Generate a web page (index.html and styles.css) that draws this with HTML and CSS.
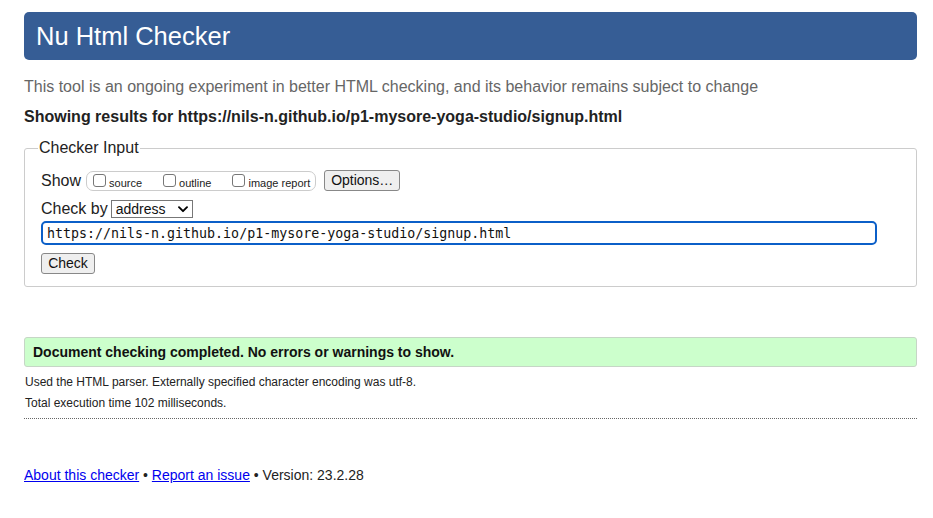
FILE: index.html
```html
<!DOCTYPE html>
<html lang="en">
<head>
<meta charset="utf-8">
<title>Nu Html Checker</title>
<link rel="stylesheet" href="styles.css">
</head>
<body>
<header class="banner"><h1 class="title">Nu Html Checker</h1></header>
<p class="subtitle">This tool is an ongoing experiment in better HTML checking, and its behavior remains subject to change</p>
<p class="showing">Showing results for https://nils-n.github.io/p1-mysore-yoga-studio/signup.html</p>
<form class="form">
  <fieldset class="fieldset">
    <legend class="legend">Checker Input</legend>
    <div class="row">
      <span class="label">Show</span>
      <span class="showgroup">
        <label class="opt"><input type="checkbox" class="cb"><span class="opttext">source</span></label>
        <label class="opt"><input type="checkbox" class="cb"><span class="opttext">outline</span></label>
        <label class="opt"><input type="checkbox" class="cb"><span class="opttext">image report</span></label>
      </span>
      <button type="button" class="btn options">Options…</button>
    </div>
    <div class="row row2">
      <span class="label">Check by</span>
      <span class="selectwrap">
        <select class="select"><option>address</option></select>
        <svg class="chev" width="10" height="7" viewBox="0 0 10 7" aria-hidden="true"><path d="M1 1.2 L5 5.2 L9 1.2" fill="none" stroke="#000" stroke-width="1.9" stroke-linecap="round" stroke-linejoin="round"/></svg>
      </span>
    </div>
    <div class="row row3">
      <input type="text" class="url" value="https://nils-n.github.io/p1-mysore-yoga-studio/signup.html">
    </div>
    <div class="row row4">
      <button type="button" class="btn check">Check</button>
    </div>
  </fieldset>
</form>
<div class="success">Document checking completed. No errors or warnings to show.</div>
<p class="info">Used the HTML parser. Externally specified character encoding was utf-8.</p>
<p class="info info2">Total execution time 102 milliseconds.</p>
<hr class="rule">
<footer class="footer"><a href="#" class="link">About this checker</a> • <a href="#" class="link">Report an issue</a> • Version: 23.2.28</footer>
</body>
</html>
```
FILE: styles.css
```css
html, body { background: #fff; }
body {
  margin: 12px 16px 0 24px;
  font-family: "Liberation Sans", Arial, Helvetica, sans-serif;
  color: #222;
}
.banner {
  background: #365d95;
  border-radius: 5px;
  height: 48px;
  display: flex;
  align-items: center;
  padding-left: 12px;
}
.title {
  margin: 0;
  font-size: 25.5px;
  font-weight: normal;
  color: #fff;
}
.subtitle {
  margin: 18px 0 0;
  font-size: 16px;
  line-height: 18px;
  color: #666;
}
.showing {
  margin: 12px 0 0;
  font-size: 16px;
  line-height: 18px;
  font-weight: bold;
  color: #222;
}
.form { margin: 13px 0 0; }
.fieldset {
  margin: 0;
  border: 1px solid #ccc;
  border-radius: 3px;
  padding: 13px 16px 12px 16px;
}
.legend {
  padding: 0 1px;
  margin-left: -3px;
  font-size: 16px;
  color: #222;
}
.row { display: flex; align-items: center; }
.label { font-size: 16px; color: #222; }
.showgroup {
  display: inline-flex;
  align-items: center;
  margin-left: 5px;
  height: 18px;
  border: 1px solid #ccc;
  border-radius: 7px;
  padding: 0 5px 0 6px;
}
.opt {
  display: inline-flex;
  align-items: center;
  margin-right: 21px;
}
.opt:last-child { margin-right: 0; }
.opttext {
  font-size: 11px;
  color: #222;
  margin-top: 4px;
}
.cb {
  appearance: none;
  -webkit-appearance: none;
  width: 13px;
  height: 13px;
  margin: 0 3px 0 0;
  border: 1px solid #777;
  border-radius: 3px;
  background: #fff;
  box-sizing: border-box;
}
.btn {
  font-family: "Liberation Sans", Arial, sans-serif;
  font-size: 14px;
  color: #111;
  background: #efefef;
  border: 1px solid #888;
  border-radius: 3px;
  height: 21px;
  padding: 0 6px;
  line-height: 19px;
}
.options { margin-left: 8px; width: 76px; padding: 0; }
.row2 { margin-top: 9px; }
.selectwrap {
  position: relative;
  display: inline-block;
  margin-left: 3px;
  height: 18px;
}
.select {
  appearance: none;
  -webkit-appearance: none;
  width: 82px;
  height: 18px;
  font-size: 14px;
  font-family: "Liberation Sans", Arial, sans-serif;
  color: #111;
  border: 1px solid #777;
  border-radius: 0;
  background: #fff;
  padding: 0 0 0 4px;
  display: block;
}
.chev {
  position: absolute;
  right: 5px;
  top: 6px;
  pointer-events: none;
}
.row3 { margin-top: 3px; }
.url {
  width: 836px;
  height: 24px;
  box-sizing: border-box;
  border: 2px solid #0b5fc8;
  border-radius: 5px;
  font-family: "DejaVu Sans Mono", "Liberation Mono", monospace;
  font-size: 13.3px;
  padding: 0 4px;
  color: #111;
  outline: none;
}
.row4 { margin-top: 8px; }
.check { width: 54px; padding: 0; }
.success {
  margin-top: 50px;
  background: #ccffcc;
  border: 1px solid #c6d6c6;
  border-radius: 3px;
  height: 30px;
  box-sizing: border-box;
  display: flex;
  align-items: center;
  padding-left: 8px;
  font-size: 14px;
  font-weight: bold;
  color: #111;
}
.info {
  margin: 8px 0 0 1px;
  font-size: 12px;
  line-height: 14px;
  color: #222;
}
.info2 { margin-top: 7px; }
.rule {
  margin: 8px 0 0;
  border: 0;
  border-top: 1px dotted #666;
  height: 0;
}
.footer {
  margin-top: 48px;
  font-size: 14px;
  color: #222;
}
.link { color: #0000ee; text-decoration: underline; }
```
